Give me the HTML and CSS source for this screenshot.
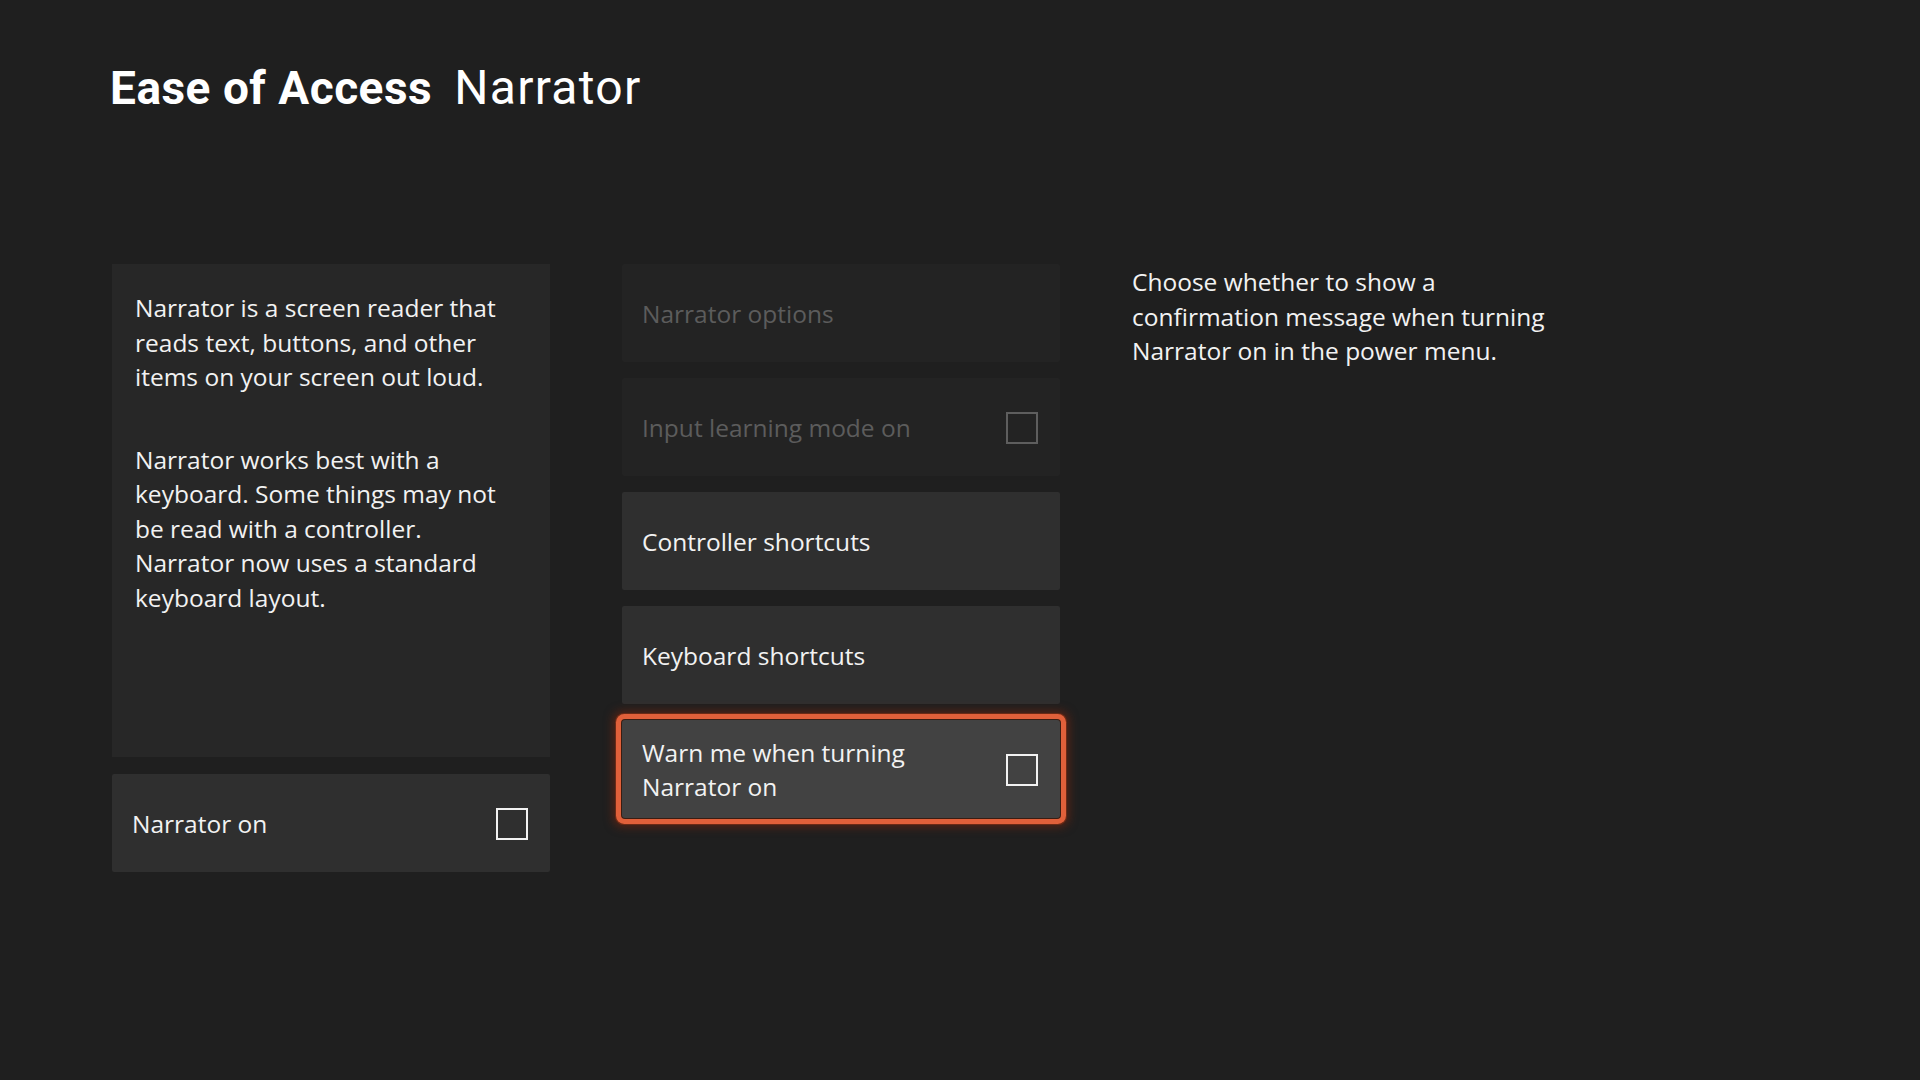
FILE: index.html
```html
<!DOCTYPE html>
<html lang="en">
<head>
<meta charset="utf-8">
<title>Ease of Access Narrator</title>
<link rel="stylesheet" href="styles.css">
</head>
<body>
<div class="page">
  <h1 class="title"><span class="title-strong">Ease of Access</span><span class="title-light">Narrator</span></h1>
  <div class="columns">
    <div class="col col-left">
      <div class="info-panel">
        <p>Narrator is a screen reader that reads text, buttons, and other items on your screen out loud.</p>
        <p>Narrator works best with a keyboard. Some things may not be read with a controller. Narrator now uses a standard keyboard layout.</p>
      </div>
      <div class="item">
        <span class="item-label">Narrator on</span>
        <span class="check"></span>
      </div>
    </div>
    <div class="col col-mid">
      <div class="item disabled"><span class="item-label">Narrator options</span></div>
      <div class="item disabled"><span class="item-label">Input learning mode on</span><span class="check"></span></div>
      <div class="item"><span class="item-label">Controller shortcuts</span></div>
      <div class="item"><span class="item-label">Keyboard shortcuts</span></div>
      <div class="item focused"><span class="item-label">Warn me when turning Narrator on</span><span class="check"></span></div>
    </div>
    <div class="col col-right">
      <p class="desc">Choose whether to show a confirmation message when turning Narrator on in the power menu.</p>
    </div>
  </div>
</div>
</body>
</html>
```
FILE: styles.css
```css
html, body {
  margin: 0;
  padding: 0;
  background: #1f1f1f;
}
body {
  width: 1920px;
  height: 1080px;
  overflow: hidden;
  color: #f2f2f2;
  font-family: "Open Sans", "Noto Sans", sans-serif;
}
.page {
  padding: 58px 0 0 110px;
}
.title {
  margin: 0;
  font-family: "Roboto", "Liberation Sans", sans-serif;
  font-size: 46px;
  line-height: 60px;
  font-weight: 400;
  color: #ffffff;
  display: flex;
  align-items: baseline;
  gap: 22px;
}
.title-strong {
  font-weight: 700;
  letter-spacing: 0.5px;
}
.title-light {
  font-weight: 400;
  font-size: 48px;
  letter-spacing: 1.3px;
}
.columns {
  display: flex;
  gap: 72px;
  margin-top: 146px;
  padding-left: 2px;
}
.col {
  width: 438px;
  display: flex;
  flex-direction: column;
  gap: 16px;
}
.col-left {
  gap: 17px;
}
.info-panel {
  background: #272727;
  height: 493px;
  box-sizing: border-box;
  padding: 27px 45px 0 23px;
  font-size: 24.5px;
  line-height: 34.5px;
}
.info-panel p {
  margin: 0 0 48px 0;
}
.item {
  height: 98px;
  box-sizing: border-box;
  background: #2f2f2f;
  border-radius: 2px;
  display: flex;
  align-items: center;
  justify-content: space-between;
  padding: 2px 22px 0 20px;
  font-size: 24.5px;
  line-height: 34px;
  color: #f2f2f2;
}
.item-label {
  max-width: 280px;
}
.item.disabled {
  background: #232323;
  color: #5c5c5c;
}
.check {
  width: 32px;
  height: 32px;
  box-sizing: border-box;
  border: 2px solid #f2f2f2;
  flex: none;
}
.item.disabled .check {
  border-color: #5e5e5e;
}
.item.focused {
  background: #424242;
  border-radius: 3px;
  box-shadow: 0 0 0 1px #3a1d12, 0 0 0 6px #e0603a, 0 0 0 7px #6a2a16, 0 0 10px 9px rgba(140, 40, 12, 0.5);
}
.col-right {
  width: 420px;
}
.desc {
  margin: 0;
  padding-top: 1px;
  font-size: 24.5px;
  line-height: 34.5px;
  color: #f2f2f2;
}
```
